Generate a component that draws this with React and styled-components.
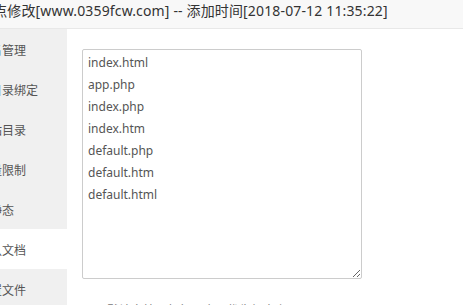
import React from 'react';
import styled, { createGlobalStyle } from 'styled-components';

const GlobalStyle = createGlobalStyle`
  html, body {
    margin: 0;
    padding: 0;
    background: #fff;
    overflow: hidden;
  }
  body {
    font-family: 'Noto Sans', 'Noto Sans CJK SC', sans-serif;
  }
`;

const menuItems = ['域名管理', '子目录绑定', '网站目录', '流量限制', '伪静态', '默认文档', '配置文件'];
const docs = ['index.html', 'app.php', 'index.php', 'index.htm', 'default.php', 'default.htm', 'default.html'];

const App = () => {
  return (
    <>
      <GlobalStyle />
      <StyledPage>
        <StyledTitleBar>
          <StyledTitleText>站点修改[www.0359fcw.com] -- 添加时间[2018-07-12 11:35:22]</StyledTitleText>
        </StyledTitleBar>
        <StyledBody>
          <StyledSidebar>
            {menuItems.map((item) => (
              <StyledMenuItem key={item} active={item === '默认文档'}>
                <span>{item}</span>
              </StyledMenuItem>
            ))}
          </StyledSidebar>
          <StyledContent>
            <StyledTextArea defaultValue={docs.join('\n')} spellCheck={false} />
            <StyledTips>
              <li>默认文档，每行一个，优先级由上至下。</li>
            </StyledTips>
          </StyledContent>
        </StyledBody>
      </StyledPage>
    </>
  );
}

export default App;

const StyledPage = styled.div`
  width: 463px;
  height: 305px;
  overflow: hidden;
  display: flex;
  flex-direction: column;
`;

const StyledTitleBar = styled.div`
  height: 28px;
  flex-shrink: 0;
  background: #f8f8f8;
  border-bottom: 1px solid #e8e8e8;
  overflow: hidden;
  white-space: nowrap;
`;

const StyledTitleText = styled.div`
  margin-left: -21px;
  font-family: 'Noto Sans', 'Noto Sans CJK SC', sans-serif;
  font-size: 14px;
  line-height: 22px;
  letter-spacing: 0.15px;
  color: #333;
`;

const StyledBody = styled.div`
  display: flex;
  flex: 1;
  min-height: 0;
`;

const StyledSidebar = styled.div`
  width: 67px;
  flex-shrink: 0;
  background: #f0f0f0;
  display: flex;
  flex-direction: column;
  overflow: hidden;
`;

const StyledMenuItem = styled.div`
  height: 40px;
  flex-shrink: 0;
  display: flex;
  align-items: center;
  white-space: nowrap;
  background: ${(p) => (p.active ? '#fff' : '#f0f0f0')};
  font-family: 'Noto Sans CJK SC', sans-serif;
  font-size: 12px;
  color: #555;

  span {
    margin-left: -22px;
  }
`;

const StyledContent = styled.div`
  flex: 1;
  padding: 20px 0 0 15px;
  background: #fff;
`;

const StyledTextArea = styled.textarea`
  display: block;
  box-sizing: border-box;
  width: 280px;
  height: 230px;
  margin: 0;
  padding: 2px 5px 1px;
  border: 1px solid #ccc;
  border-radius: 2px;
  outline: none;
  font-family: 'Noto Sans', 'Noto Sans CJK SC', sans-serif;
  font-size: 12px;
  line-height: 22px;
  color: #555;
  background: #fff;
`;

const StyledTips = styled.ul`
  margin: 21px 0 0;
  padding-left: 25px;
  font-family: 'Noto Sans CJK SC', sans-serif;
  font-size: 12px;
  line-height: 20px;
  color: #777;
  list-style: disc;
`;
